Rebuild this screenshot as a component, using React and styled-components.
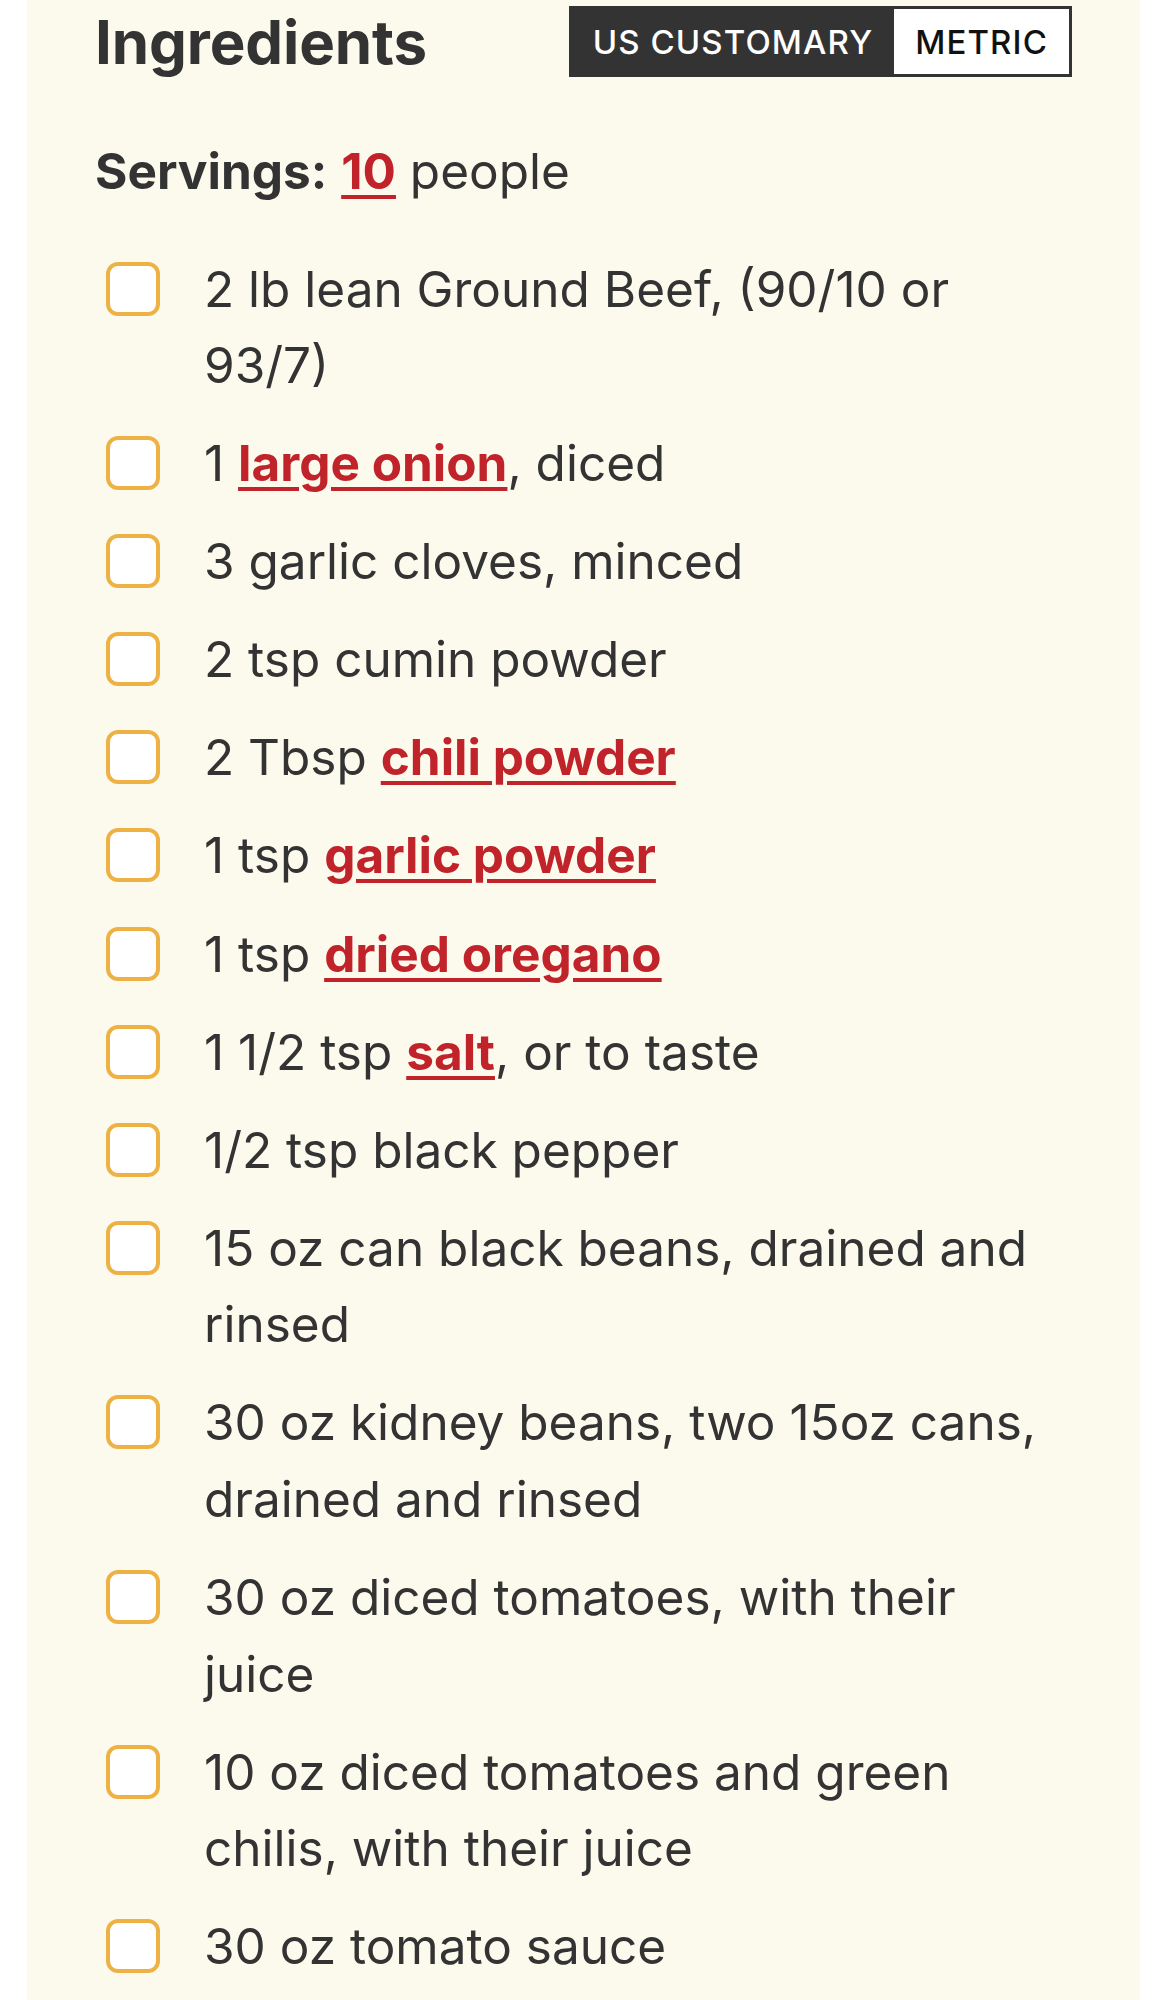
import React from "react";
import styled, { createGlobalStyle } from "styled-components";

const Global = createGlobalStyle`
  html, body { margin: 0; padding: 0; background: #ffffff; }
  body { font-family: "Inter", "Noto Sans", sans-serif; color: #333333; }
`;

const Page = styled.div`
  padding: 0 28px 0 27px;
  min-height: 2000px;
  box-sizing: border-box;
`;

const Card = styled.section`
  background: #fcf9ed;
  min-height: 2000px;
  padding: 6px 68px 40px 68px;
  box-sizing: border-box;
`;

const Header = styled.div`
  display: flex;
  align-items: center;
  justify-content: space-between;
`;

const Title = styled.h2`
  margin: 0;
  font-size: 60px;
  line-height: 70px;
  font-weight: 700;
  color: #333333;
  letter-spacing: -0.1px;
`;

const Toggle = styled.div`
  display: flex;
  border: 3px solid #333333;
  background: #333333;
  height: 71px;
  box-sizing: border-box;
`;

const ToggleButton = styled.button`
  border: none;
  margin: 0;
  font-family: "Inter", "Noto Sans", sans-serif;
  font-size: 33px;
  font-weight: 500;
  letter-spacing: 1.1px;
  text-transform: uppercase;
  padding: 0 ${(p) => (p.$active ? "21px" : "21px")};
  background: ${(p) => (p.$active ? "#333333" : "#ffffff")};
  color: ${(p) => (p.$active ? "#ffffff" : "#111111")};
  cursor: pointer;
`;

const Servings = styled.p`
  margin: 56px 0 0 0;
  font-size: 49.5px;
  line-height: 76.5px;
  color: #333333;
`;

const Label = styled.strong`
  font-weight: 700;
`;

const Link = styled.a`
  color: #c1232b;
  font-weight: 700;
  text-decoration: underline;
  text-decoration-thickness: 4px;
  text-underline-offset: 6px;
`;

const List = styled.ul`
  list-style: none;
  margin: 41px 0 0 0;
  padding: 0 26px 0 11px;
  display: flex;
  flex-direction: column;
  gap: 21.6px;
`;

const Item = styled.li`
  display: flex;
  align-items: flex-start;
  font-size: 49.5px;
  line-height: 76.5px;
  color: #333333;
`;

const Box = styled.span`
  flex: 0 0 auto;
  width: 54px;
  height: 54px;
  box-sizing: border-box;
  margin-top: 11px;
  margin-right: 44px;
  border: 4px solid #eeb144;
  border-radius: 12px;
  background: #ffffff;
`;

const Text = styled.span`
  flex: 1 1 auto;
`;

const items = [
  ["2 lb lean Ground Beef, (90/10 or 93/7)"],
  ["1 ", { link: "large onion" }, ", diced"],
  ["3 garlic cloves, minced"],
  ["2 tsp cumin powder"],
  ["2 Tbsp ", { link: "chili powder" }],
  ["1 tsp ", { link: "garlic powder" }],
  ["1 tsp ", { link: "dried oregano" }],
  ["1 1/2 tsp ", { link: "salt" }, ", or to taste"],
  ["1/2 tsp black pepper"],
  ["15 oz can black beans, drained and rinsed"],
  ["30 oz kidney beans, two 15oz cans, drained and rinsed"],
  ["30 oz diced tomatoes, with their juice"],
  ["10 oz diced tomatoes and green chilis, with their juice"],
  ["30 oz tomato sauce"],
];

export default function App() {
  return (
    <>
      <Global />
      <Page>
        <Card>
          <Header>
            <Title>Ingredients</Title>
            <Toggle>
              <ToggleButton $active>US Customary</ToggleButton>
              <ToggleButton>Metric</ToggleButton>
            </Toggle>
          </Header>
          <Servings>
            <Label>Servings:</Label> <Link href="#">10</Link> people
          </Servings>
          <List>
            {items.map((parts, i) => (
              <Item key={i}>
                <Box />
                <Text>
                  {parts.map((p, j) =>
                    typeof p === "string" ? (
                      <React.Fragment key={j}>{p}</React.Fragment>
                    ) : (
                      <Link key={j} href="#">
                        {p.link}
                      </Link>
                    )
                  )}
                </Text>
              </Item>
            ))}
          </List>
        </Card>
      </Page>
    </>
  );
}
